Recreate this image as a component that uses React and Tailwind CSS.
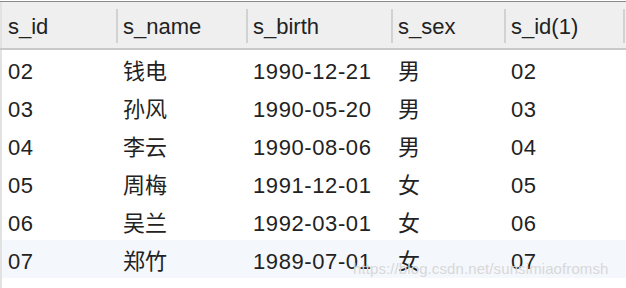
export default function App() {
  const cols = [
    { k: "s_id", w: "w-[116px]" },
    { k: "s_name", w: "w-[130px]" },
    { k: "s_birth", w: "w-[145px]" },
    { k: "s_sex", w: "w-[113px]" },
    { k: "s_id(1)", w: "w-[119px]" },
  ];
  const rows = [
    ["02", "钱电", "1990-12-21", "男", "02"],
    ["03", "孙风", "1990-05-20", "男", "03"],
    ["04", "李云", "1990-08-06", "男", "04"],
    ["05", "周梅", "1991-12-01", "女", "05"],
    ["06", "吴兰", "1992-03-01", "女", "06"],
    ["07", "郑竹", "1989-07-01", "女", "07"],
  ];
  return (
    <div
      className="relative w-[626px] h-[288px] bg-white overflow-hidden text-[#222] text-[22px]"
      style={{ fontFamily: '"Liberation Sans", "Noto Sans CJK SC", sans-serif' }}
    >
      <div className="h-[1px] bg-white" />
      <div className="h-[1px] bg-[#8a8a8a]" />
      <div className="flex h-[46px] pt-[2px] bg-[#efefef] border-l-2 border-[#e2e2e2]">
        {cols.map((c, i) => (
          <div
            key={c.k}
            className={`${i === 0 ? "w-[114px] pl-[6px]" : c.w} flex items-center`}
          >
            {i > 0 && <div className="w-[2px] h-[34px] bg-[#d2d2d2] mr-[5px]" />}
            <span>{c.k}</span>
          </div>
        ))}
        <div className="flex items-center">
          <div className="w-[2px] h-[34px] bg-[#d2d2d2]" />
        </div>
      </div>
      <div className="h-[2px] bg-[#c9c9c9]" />
      <div className="border-l-2 border-[#e2e2e2]">
        {rows.map((r, ri) => (
          <div
            key={ri}
            className={`flex h-[38px] pt-[6px] items-center ${ri === 5 ? "bg-[#f4f7fc]" : "bg-white"}`}
          >
            {r.map((v, i) => (
              <div
                key={i}
                className={`${i === 0 ? "w-[114px] pl-[6px]" : cols[i].w + " pl-[7px]"} leading-none ${i === 1 || i === 3 ? "" : "tracking-[0.6px]"}`}
              >
                {v}
              </div>
            ))}
          </div>
        ))}
        <div className="h-[20px]" />
      </div>
      <div
        className="absolute left-[353px] top-[261px] text-[15px] leading-none text-[#d8d8d8] tracking-[0.1px]"
        style={{ fontFamily: '"Liberation Sans", sans-serif' }}
      >
        https://blog.csdn.net/sunsimiaofromsh
      </div>
    </div>
  );
}
